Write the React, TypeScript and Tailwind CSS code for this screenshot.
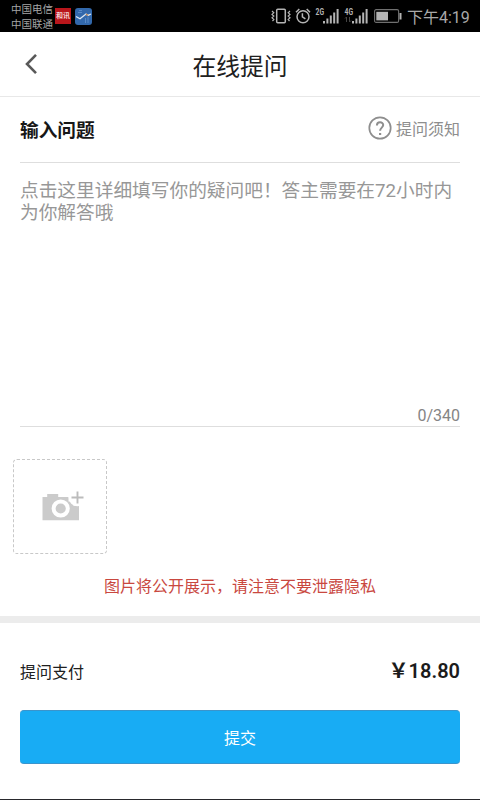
import React, { useState } from 'react';

const MAX_LENGTH = 340;

function SignalBars({ label, arrows }: { label: string; arrows?: boolean }) {
  return (
    <svg width="25" height="18" viewBox="0 0 25 18" className="shrink-0" fill="#b4b4b4">
      <text x="0.5" y="7.5" fontSize="9" fontWeight="700" textLength="8.5" lengthAdjust="spacingAndGlyphs">
        {label}
      </text>
      {arrows && <path d="M2.5 10v5M1 11.5l1.5-1.5M5.5 10v5M7 13.5L5.5 15" stroke="#444" strokeWidth="1" fill="none" />}
      <path d="M8 14h2v2.5H8zM11.4 11.5h2v5h-2zM14.8 8.5h2v8h-2zM18.2 5.5h2v11h-2zM21.6 2h2v14.5h-2z" />
    </svg>
  );
}

function StatusBar() {
  return (
    <div className="flex h-8 shrink-0 bg-black text-[#b4b4b4]">
      <div className="ml-[11px] w-11 pt-[2px] text-[10.5px] leading-[15px] whitespace-nowrap text-[#a5a5a5]">
        <div>中国电信</div>
        <div>中国联通</div>
      </div>
      <div className="mt-[8px] flex h-4 w-4 items-center justify-center overflow-hidden bg-[#b9161b] text-[7px] leading-none font-bold whitespace-nowrap text-[#f3d6d6]">
        和讯
      </div>
      <svg width="17" height="17" viewBox="0 0 17 17" className="mt-[8px] ml-1">
        <rect width="17" height="17" rx="3" fill="#3268ab" />
        <path d="M3 4.5h4M4 2.5h3M10.5 10v5M13 9v6" stroke="#5d8fc9" strokeWidth="0.9" />
        <path d="M1 8.5l4 2.3L11 6l2 1.4L16 6" stroke="#dce9f5" strokeWidth="1.3" fill="none" />
        <path d="M11 6l2 1.4" stroke="#b77d4c" strokeWidth="1.2" />
      </svg>
      <div className="mr-[10px] ml-auto flex">
        <svg width="20" height="16" viewBox="0 0 20 16" className="mt-[8px] mr-[4px]" fill="none" stroke="#b4b4b4" strokeWidth="1.5">
          <rect x="5.7" y="1.2" width="8.6" height="13.6" rx="1" />
          <path d="M1 3l1.8 1.7L1 6.4l1.8 1.7L1 9.8l1.8 1.7L1.5 13M19 3l-1.8 1.7L19 6.4l-1.8 1.7L19 9.8l-1.8 1.7 1.3 1.5" strokeWidth="1.2" />
        </svg>
        <svg width="16" height="16" viewBox="0 0 16 16" className="mt-[8px] mr-[4px]" fill="none" stroke="#b4b4b4" strokeWidth="1.5">
          <circle cx="8" cy="8.7" r="6" />
          <path d="M1 4.3L4.3 1M15 4.3L11.7 1M7.4 5.3v3.6l3 2" />
        </svg>
        <div className="mt-[7px] flex gap-[4px]">
          <SignalBars label="2G" />
          <SignalBars label="4G" arrows />
        </div>
        <svg width="28" height="14" viewBox="0 0 28 14" className="mt-[9px] mr-[5px] ml-[5px]">
          <rect x="0.6" y="0.6" width="24" height="12.8" rx="1.5" fill="none" stroke="#707070" strokeWidth="1.1" />
          <rect x="2.3" y="2.8" width="11.7" height="8.6" fill="#b4b4b4" />
          <rect x="25.5" y="4" width="2" height="6.5" fill="#b4b4b4" />
        </svg>
        <div className="w-[63px] text-[16px] leading-[35px] whitespace-nowrap text-[#a9a9a9]">下午4:19</div>
      </div>
    </div>
  );
}

function CameraPlusIcon() {
  return (
    <svg width="42" height="31" viewBox="0 0 42 31" className="relative left-[3px]">
      <path d="M.5 6h4.7V3h11v3h10.3v4.5h4.7v4H37V29.2H.5z" fill="#cbcbcb" />
      <circle cx="35.5" cy="6.5" r="8.8" fill="#fff" />
      <circle cx="18.7" cy="17.5" r="7.1" fill="#cbcbcb" stroke="#fff" strokeWidth="4" />
      <path d="M35.5.5v12M29.5 6.5h12" stroke="#bcbcbc" strokeWidth="1.9" />
    </svg>
  );
}

export default function App() {
  const [question, setQuestion] = useState('');

  return (
    <div className="flex h-[800px] w-[480px] flex-col overflow-hidden border-b border-[#29292d] bg-white font-[Roboto,'Noto_Sans_CJK_SC',sans-serif] text-[#202020]">
      <StatusBar />

      <header className="relative flex h-[65px] shrink-0 items-center justify-center border-b border-[#e8e8e8]">
        <button className="absolute top-[21px] left-[24px]" aria-label="返回">
          <svg width="14" height="22" viewBox="0 0 14 22" fill="none" stroke="#595959" strokeWidth="2.6">
            <path d="M12 1.8L3 11l9 9.2" />
          </svg>
        </button>
        <h1 className="pt-[5px] text-[23.8px] leading-8">在线提问</h1>
      </header>

      <main className="px-5">
        <div className="flex h-[66px] items-center justify-between border-b border-[#dedede]">
          <h2 className="pt-[3px] text-[18.7px] leading-6 font-bold text-[#171717]">输入问题</h2>
          <div className="flex items-center gap-1 text-[16px] leading-6 text-[#8e8e8e]">
            <svg width="24" height="24" viewBox="0 0 24 24" className="-mt-[3px]" fill="none" stroke="#8e8e8e" strokeWidth="1.7">
              <circle cx="12" cy="12" r="10.7" />
              <path d="M8.9 9.4c0-4.2 6.3-4.2 6.3-.3 0 2.5-3.1 2.6-3.1 5.7" strokeWidth="2" />
              <path d="M12.1 17v2" strokeWidth="2.2" />
            </svg>
            提问须知
          </div>
        </div>

        <div className="flex h-[264px] flex-col border-b border-[#dedede]">
          <textarea
            className="mt-[17px] block w-full flex-1 resize-none text-[18.7px] leading-[22px] placeholder-[#979797] outline-none"
            placeholder="点击这里详细填写你的疑问吧！答主需要在72小时内为你解答哦"
            maxLength={MAX_LENGTH}
            value={question}
            onChange={(e) => setQuestion(e.target.value)}
          />
          <div className="text-right text-[16px] leading-5 text-[#858585]">
            {question.length}/{MAX_LENGTH}
          </div>
        </div>

        <button className="mt-8 -ml-[7px] flex h-[95px] w-[94px] items-center justify-center rounded-[4px] border border-dashed border-[#c8c8c8]" aria-label="添加图片">
          <CameraPlusIcon />
        </button>

        <p className="mt-[21px] text-center text-[16px] leading-6 text-[#c9483f]">图片将公开展示，请注意不要泄露隐私</p>
      </main>

      <div className="mt-[17px] h-[7px] shrink-0 bg-[#ececec]" />

      <footer className="px-5 pt-[33px]">
        <div className="flex h-8 items-center justify-between">
          <span className="pt-[2px] text-[16px] leading-6">提问支付</span>
          <span className="pb-[2px] text-[20px] leading-6 font-semibold text-[#1b1b1b]">￥18.80</span>
        </div>
        <button className="mt-[22px] block h-[54px] w-full rounded-[4px] border-y border-[#3a94cc] bg-[#18acf4] pt-[3px] text-[16px] text-white">
          提交
        </button>
      </footer>
    </div>
  );
}
